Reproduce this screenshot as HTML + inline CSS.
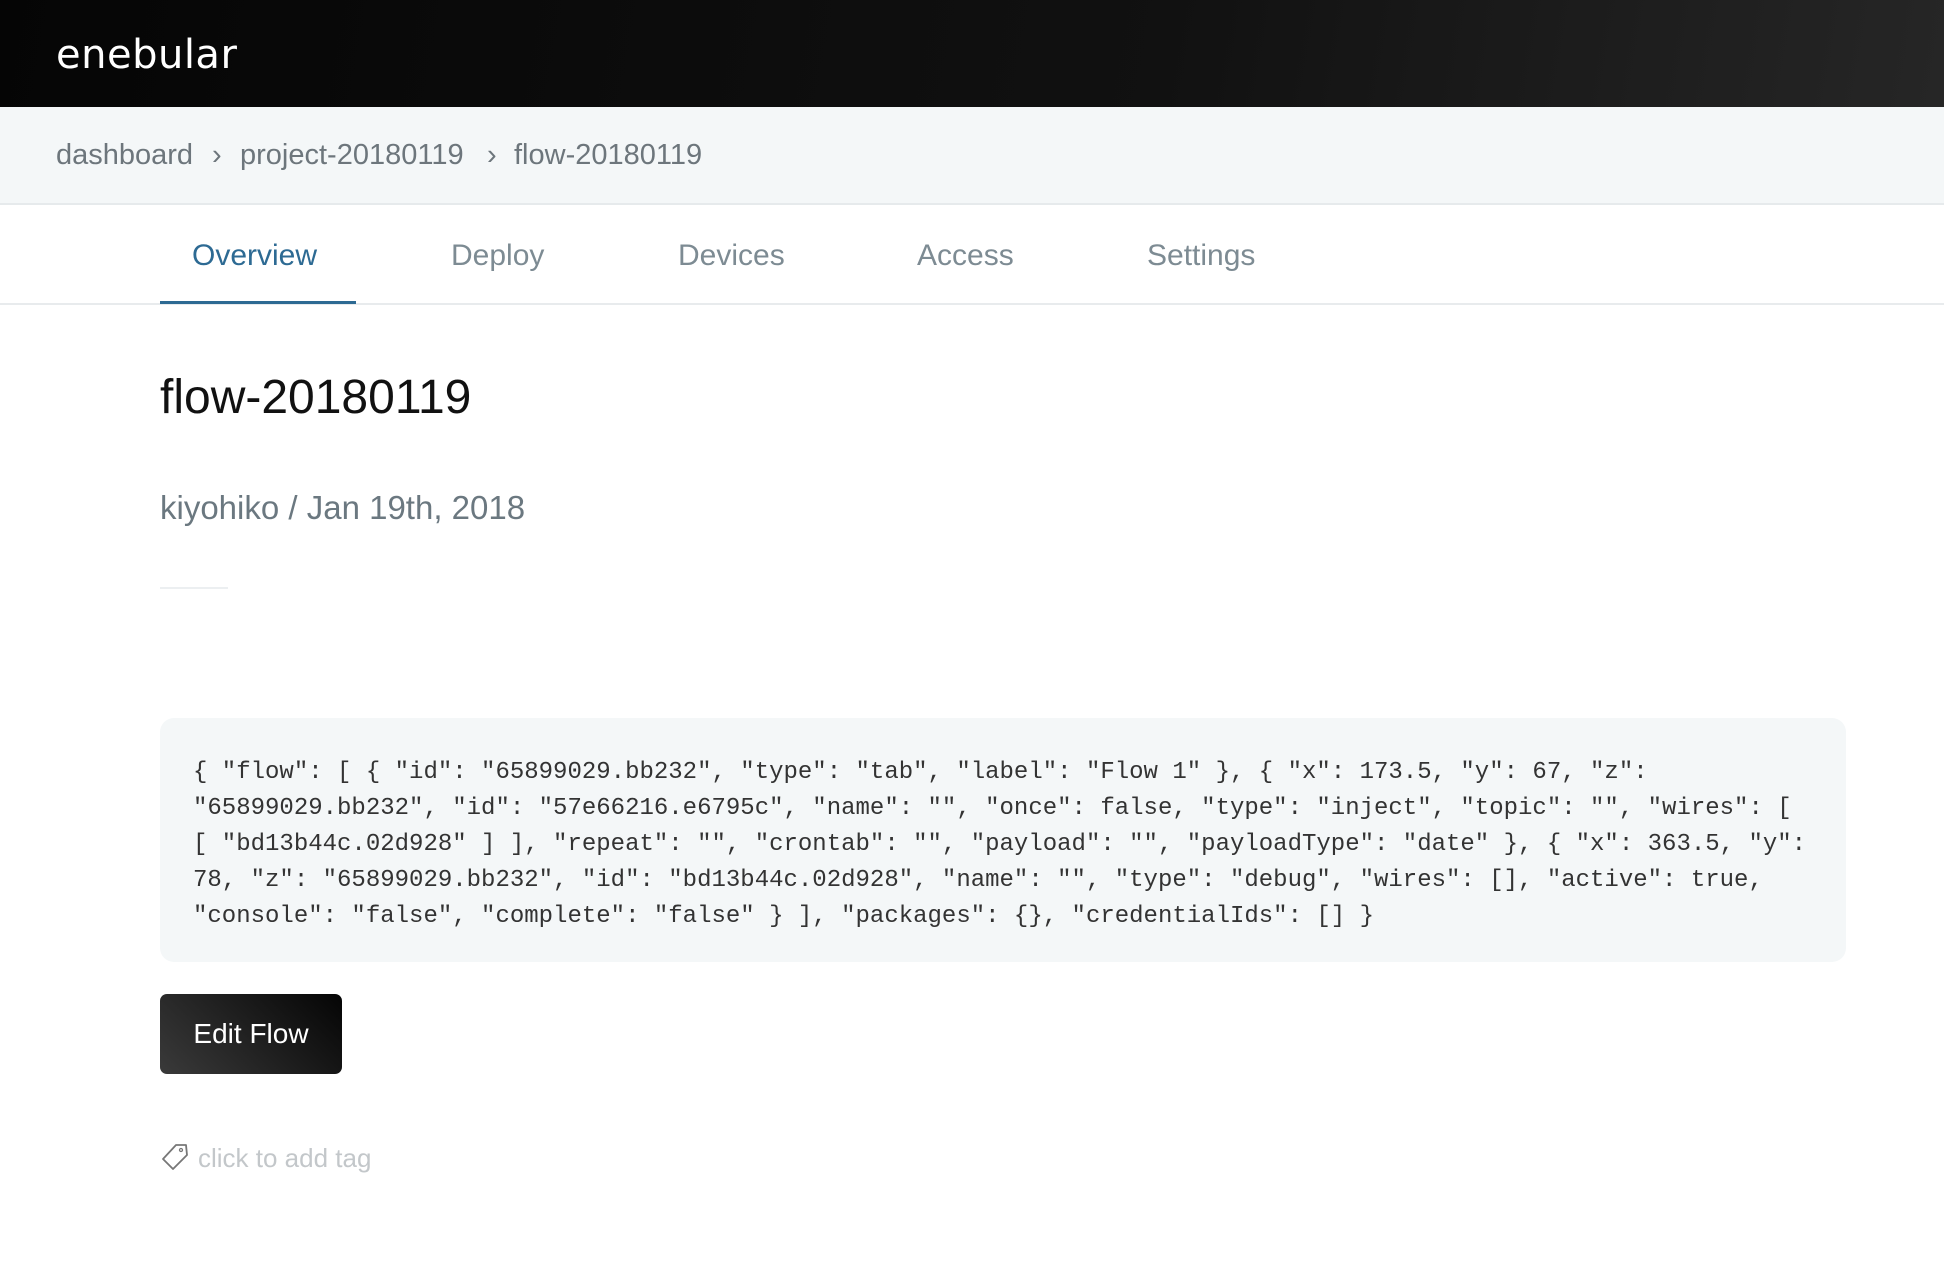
<!DOCTYPE html>
<html><head><meta charset="utf-8"><style>
*{margin:0;padding:0;box-sizing:border-box}
body{width:1944px;height:1264px;background:#fff;font-family:"Liberation Sans",sans-serif;position:relative;overflow:hidden}
.hdr{position:absolute;left:0;top:0;width:1944px;height:107px;background:linear-gradient(100deg,#050505 0%,#111 60%,#262626 100%)}
.logo{position:absolute;left:56px;top:32px;color:#fff;font-size:40px;letter-spacing:0.5px;font-family:"DejaVu Sans","Liberation Sans",sans-serif}
.bc{position:absolute;left:0;top:107px;width:1944px;height:98px;background:#f4f7f8;border-bottom:2px solid #e6eaec}
.bc span{position:absolute;top:32px;font-size:29px;color:#6d767c}
.tabs{position:absolute;left:0;top:205px;width:1944px;height:100px;border-bottom:2px solid #e8ebed}
.tab{position:absolute;top:34px;font-size:30px;color:#7d8b93}
.ul{position:absolute;left:160px;top:96px;width:196px;height:3px;background:#2d6a93}
h1{position:absolute;left:160px;top:370px;font-size:48px;font-weight:normal;color:#111}
.sub{position:absolute;left:160px;top:489px;font-size:33px;color:#6b7880}
.line{position:absolute;left:160px;top:587px;width:68px;height:2px;background:#eceff1}
.code{position:absolute;left:160px;top:718px;width:1686px;height:244px;background:#f4f7f8;border-radius:14px}
.code pre{position:absolute;left:33px;top:37px;font-family:"Liberation Mono",monospace;font-size:24px;line-height:36px;color:#333}
.btn{position:absolute;left:160px;top:994px;width:182px;height:80px;border-radius:7px;background:linear-gradient(45deg,#3a3a3a,#050505);color:#fff;font-size:28px;line-height:80px;text-align:center}
.tag{position:absolute;left:198px;top:1143px;font-size:26px;color:#c3c7ca}
</style></head><body>
<div class="hdr"><div class="logo">enebular</div></div>
<div class="bc"><span style="left:56px">dashboard</span><span style="left:212px">›</span><span style="left:240px">project-20180119</span><span style="left:487px">›</span><span style="left:514px">flow-20180119</span></div>
<div class="tabs">
<span class="tab" style="left:192px;color:#2d6a93">Overview</span>
<span class="tab" style="left:451px">Deploy</span>
<span class="tab" style="left:678px">Devices</span>
<span class="tab" style="left:917px">Access</span>
<span class="tab" style="left:1147px">Settings</span>
<div class="ul"></div></div>
<h1>flow-20180119</h1>
<div class="sub">kiyohiko / Jan 19th, 2018</div>
<div class="line"></div>
<div class="code"><pre>{ "flow": [ { "id": "65899029.bb232", "type": "tab", "label": "Flow 1" }, { "x": 173.5, "y": 67, "z":
"65899029.bb232", "id": "57e66216.e6795c", "name": "", "once": false, "type": "inject", "topic": "", "wires": [
[ "bd13b44c.02d928" ] ], "repeat": "", "crontab": "", "payload": "", "payloadType": "date" }, { "x": 363.5, "y":
78, "z": "65899029.bb232", "id": "bd13b44c.02d928", "name": "", "type": "debug", "wires": [], "active": true,
"console": "false", "complete": "false" } ], "packages": {}, "credentialIds": [] }</pre></div>
<div class="btn">Edit Flow</div>
<svg style="position:absolute;left:160px;top:1142px" width="30" height="30" viewBox="0 0 30 30"><path d="M3 17 L16 3 L26 3 L27 13 L13 27 Z" fill="none" stroke="#777" stroke-width="1.8" stroke-linejoin="round"/><circle cx="21" cy="8" r="1.5" fill="none" stroke="#777" stroke-width="1.3"/></svg>
<div class="tag">click to add tag</div>
</body></html>
